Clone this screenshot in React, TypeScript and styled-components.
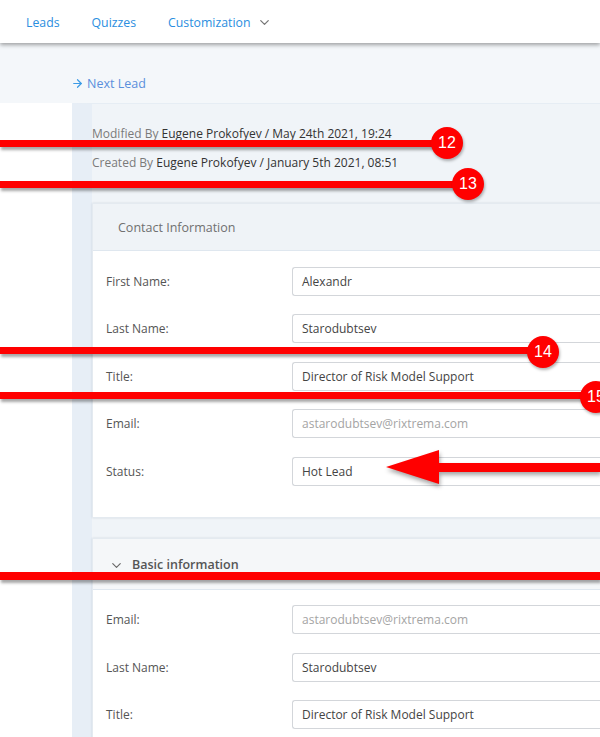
import styled, { createGlobalStyle } from 'styled-components';
import { ArrowRight, ChevronDown } from 'lucide-react';

const GlobalStyle = createGlobalStyle`
  body {
    margin: 0;
    background: #f4f7fa;
    font-family: 'Open Sans', 'Noto Sans', sans-serif;
    overflow: hidden;
  }
`;

const Page = styled.div`
  position: relative;
  width: 600px;
  height: 737px;
  overflow: hidden;
`;

const NavBar = styled.nav`
  height: 43px;
  box-sizing: border-box;
  background: #fff;
  box-shadow: 0 2px 4px rgba(0, 0, 0, 0.35);
  display: flex;
  align-items: center;
  gap: 32px;
  padding: 2px 0 0 26px;
  position: relative;
  z-index: 1;
`;

const NavLink = styled.a`
  font-size: 12.3px;
  color: #2a8ee0;
  display: flex;
  align-items: center;
  gap: 6px;
  svg {
    color: #777;
  }
`;

const SubBar = styled.div`
  height: 60px;
  display: flex;
  align-items: flex-end;
  padding: 0 0 11px 71px;
  box-sizing: border-box;
`;

const NextLead = styled.a`
  display: flex;
  align-items: center;
  gap: 3px;
  font-size: 12.5px;
  color: #5a8fdc;
  svg {
    color: #3b9be6;
  }
`;

const Body = styled.div`
  display: flex;
  height: 634px;
`;

const SidePanel = styled.aside`
  width: 72px;
  background: #fff;
  flex-shrink: 0;
`;

const Main = styled.main`
  flex: 1;
  background: #f0f4f8;
  border-left: 20px solid #e7eef6;
  border-top: 1px solid #e6edf4;
  padding-top: 15px;
`;

const MetaLine = styled.div`
  font-size: 12px;
  color: #7a7a7a;
  line-height: 29px;
  span {
    color: #333;
  }
`;

const Card = styled.section<{ $muted?: boolean }>`
  width: 560px;
  margin-top: ${(p) => (p.$muted ? '20px' : '26px')};
  background: #fff;
  box-shadow: 0 0 2px rgba(0, 30, 60, 0.12);
  border: 1px solid #e4eaf0;
  border-right: none;
`;

const CardHeader = styled.header<{ $muted?: boolean }>`
  height: ${(p) => (p.$muted ? '51px' : '47px')};
  background: ${(p) => (p.$muted ? '#f5f7f9' : '#eff3f7')};
  border-bottom: 1px solid #dfe7ef;
  display: flex;
  align-items: ${(p) => (p.$muted ? 'flex-end' : 'center')};
  padding: ${(p) => (p.$muted ? '0 0 16px 16px' : '0 0 0 25px')};
  box-sizing: border-box;
  gap: 8px;
  font-size: 12.5px;
  color: ${(p) => (p.$muted ? '#555' : '#707070')};
  font-weight: ${(p) => (p.$muted ? 600 : 400)};
  svg {
    color: #666;
  }
`;

const CardBody = styled.div<{ $top: number; $bottom: number }>`
  padding: ${(p) => p.$top}px 0 ${(p) => p.$bottom}px 13px;
  display: flex;
  flex-direction: column;
  gap: 18.5px;
`;

const Row = styled.div`
  display: flex;
  align-items: center;
`;

const Label = styled.label`
  width: 186px;
  font-size: 12px;
  color: #555;
`;

const Field = styled.div<{ $disabled?: boolean }>`
  flex: 1;
  height: 29px;
  box-sizing: border-box;
  border: 1px solid #d3d6da;
  border-right: none;
  border-radius: 3px 0 0 3px;
  padding-left: 9px;
  display: flex;
  align-items: center;
  font-size: 12px;
  color: ${(p) => (p.$disabled ? '#a4a4a4' : '#444')};
  background: #fff;
`;

/* red annotation overlay */
const Stroke = styled.div<{ $y: number; $w: number; $t?: number }>`
  position: absolute;
  left: 0;
  top: ${(p) => p.$y}px;
  width: ${(p) => p.$w}px;
  height: ${(p) => p.$t ?? 7}px;
  background: #ff0000;
  box-shadow: 1px 3px 3px rgba(0, 0, 0, 0.35);
`;

const Badge = styled.div<{ $x: number; $y: number }>`
  position: absolute;
  left: ${(p) => p.$x - 16}px;
  top: ${(p) => p.$y - 16}px;
  width: 32px;
  height: 32px;
  border-radius: 50%;
  background: #ff0000;
  color: #fff;
  font-family: 'Liberation Sans', Arial, sans-serif;
  font-size: 16px;
  display: flex;
  align-items: center;
  justify-content: center;
  box-shadow: 1px 2px 3px rgba(0, 0, 0, 0.3);
`;

const ArrowSvg = styled.svg`
  position: absolute;
  left: 380px;
  top: 445px;
  filter: drop-shadow(1px 3px 2px rgba(0, 0, 0, 0.35));
`;

const contact = [
  { label: 'First Name:', value: 'Alexandr' },
  { label: 'Last Name:', value: 'Starodubtsev' },
  { label: 'Title:', value: 'Director of Risk Model Support' },
  { label: 'Email:', value: 'astarodubtsev@rixtrema.com', disabled: true },
  { label: 'Status:', value: 'Hot Lead' },
];

const basic = [
  { label: 'Email:', value: 'astarodubtsev@rixtrema.com', disabled: true },
  { label: 'Last Name:', value: 'Starodubtsev' },
  { label: 'Title:', value: 'Director of Risk Model Support' },
];

const Fields = ({ rows }: { rows: { label: string; value: string; disabled?: boolean }[] }) => (
  <>
    {rows.map((r) => (
      <Row key={r.label}>
        <Label>{r.label}</Label>
        <Field $disabled={r.disabled}>{r.value}</Field>
      </Row>
    ))}
  </>
);

const App = () => {
  return (
    <Page>
      <GlobalStyle />
      <NavBar>
        <NavLink>Leads</NavLink>
        <NavLink>Quizzes</NavLink>
        <NavLink>
          Customization <ChevronDown size={15} strokeWidth={2} />
        </NavLink>
      </NavBar>
      <SubBar>
        <NextLead>
          <ArrowRight size={13} strokeWidth={2.2} />
          Next Lead
        </NextLead>
      </SubBar>
      <Body>
        <SidePanel />
        <Main>
          <MetaLine>
            Modified By <span>Eugene Prokofyev / May 24th 2021, 19:24</span>
          </MetaLine>
          <MetaLine>
            Created By <span>Eugene Prokofyev / January 5th 2021, 08:51</span>
          </MetaLine>
          <Card>
            <CardHeader>Contact Information</CardHeader>
            <CardBody $top={15.5} $bottom={31}>
              <Fields rows={contact} />
            </CardBody>
          </Card>
          <Card $muted>
            <CardHeader $muted>
              <ChevronDown size={15} strokeWidth={1.8} />
              Basic information
            </CardHeader>
            <CardBody $top={15.5} $bottom={20}>
              <Fields rows={basic} />
            </CardBody>
          </Card>
        </Main>
      </Body>

      <Stroke $y={140} $w={440} />
      <Badge $x={447} $y={143}>12</Badge>
      <Stroke $y={181} $w={460} />
      <Badge $x={468} $y={184}>13</Badge>
      <Stroke $y={347} $w={535} />
      <Badge $x={543} $y={352}>14</Badge>
      <Stroke $y={392} $w={590} />
      <Badge $x={596} $y={397}>15</Badge>
      <ArrowSvg width="220" height="44" viewBox="0 0 220 44">
        <polygon points="6,22 59,5 59,18 220,18 220,27 59,27 59,39" fill="#ff0000" />
      </ArrowSvg>
      <Stroke $y={572} $w={600} $t={8} />
    </Page>
  );
};

export default App;
